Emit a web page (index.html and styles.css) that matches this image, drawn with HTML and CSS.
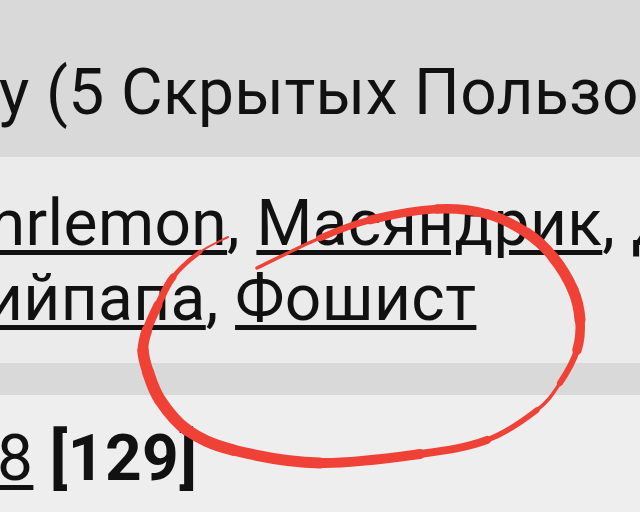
FILE: index.html
```html
<!DOCTYPE html>
<html lang="ru">
<head>
<meta charset="utf-8">
<title>Кто на форуме</title>
<link rel="stylesheet" href="styles.css">
</head>
<body>
<div class="page">
  <div class="header"><span class="title">у (5 Скрытых Пользователей)</span></div>
  <div class="users">
    <p class="user-list"><a href="#">mrlemon</a>, <a href="#">Масяндрик</a>, <a href="#">Джордж</a>,<br><a href="#" class="line-start">ийпапа</a>, <a href="#">Фошист</a></p>
  </div>
  <div class="divider"></div>
  <div class="stats"><a href="#">8</a> <b>[129]</b></div>
  <svg class="mark" width="640" height="512" viewBox="0 0 640 512" fill="none" stroke="#ef4136" stroke-linecap="round">
    <path stroke-width="2" d="M228 237 C223.3 239.5 209.2 245.3 200 252"/>
    <path stroke-width="4.5" d="M200 252 C190.8 258.7 180 268.2 173 277"/>
    <path stroke-width="7" d="M173 277 C166 285.8 162.3 296.2 158 305"/>
    <path stroke-width="9" d="M158 305 C153.7 313.8 149.5 322.5 147 330"/>
    <path stroke-width="10.5" d="M147 330 C144.5 337.5 142.8 343 143 350"/>
    <path stroke-width="11.5" d="M143 350 C143.2 357 145.2 363.7 148 372"/>
    <path stroke-width="12" d="M148 372 C150.8 380.3 153.5 390.3 160 400"/>
    <path stroke-width="12" d="M160 400 C166.5 409.7 174.8 421.7 187 430"/>
    <path stroke-width="11.5" d="M187 430 C199.2 438.3 210.8 444.5 233 450"/>
    <path stroke-width="11" d="M233 450 C255.2 455.5 288.8 462.3 320 463"/>
    <path stroke-width="10" d="M320 463 C351.2 463.7 392.2 457.8 420 454"/>
    <path stroke-width="8" d="M420 454 C447.8 450.2 467.5 447.3 487 440"/>
    <path stroke-width="5.5" d="M487 440 C506.5 432.7 524.8 419.5 537 410"/>
    <path stroke-width="3.5" d="M537 410 C549.2 400.5 553.3 393 560 383"/>
    <path stroke-width="6" d="M560 383 C566.7 373 573.7 360.5 577 350"/>
    <path stroke-width="9.5" d="M577 350 C580.3 339.5 580.7 330 580 320"/>
    <path stroke-width="11" d="M580 320 C579.3 310 577.5 300.5 573 290"/>
    <path stroke-width="11" d="M573 290 C568.5 279.5 560.7 266.5 553 257"/>
    <path stroke-width="10.5" d="M553 257 C545.3 247.5 538 240.2 527 233"/>
    <path stroke-width="10" d="M527 233 C516 225.8 502 218 487 214"/>
    <path stroke-width="9.5" d="M487 214 C472 210 456.5 208 437 209"/>
    <path stroke-width="8.5" d="M437 209 C417.5 210 389.5 215.2 370 220"/>
    <path stroke-width="6.5" d="M370 220 C350.5 224.8 338.8 230 320 238"/>
    <path stroke-width="3.5" d="M320 238 C301.2 246 267.5 263 257 268"/>
  </svg>
</div>
</body>
</html>
```

FILE: styles.css
```css
html, body {
  margin: 0;
  padding: 0;
}

body {
  width: 640px;
  height: 512px;
  overflow: hidden;
  font-family: Roboto, "Noto Sans", sans-serif;
  font-size: 64px;
  line-height: 75px;
  letter-spacing: 0.4px;
  color: #111;
}

.page {
  position: relative;
  height: 512px;
  display: flex;
  flex-direction: column;
}

.header {
  height: 157px;
  box-sizing: border-box;
  padding-top: 55px;
  background: #d9d9d9;
  white-space: nowrap;
  overflow: hidden;
}

.title {
  margin-left: -1px;
}

.users {
  height: 206px;
  box-sizing: border-box;
  padding-top: 29px;
  background: #ebebeb;
  overflow: hidden;
}

.user-list {
  margin: 0;
  white-space: nowrap;
  text-indent: -31px;
}

.line-start {
  margin-left: -14px;
}

a {
  color: #111;
  text-decoration: underline;
  text-decoration-thickness: 5px;
  text-underline-offset: 5px;
}

.divider {
  height: 32px;
  background: #d9d9d9;
}

.stats {
  flex: 1;
  box-sizing: border-box;
  padding-top: 26px;
  background: #eeeeee;
  white-space: nowrap;
  text-indent: -3px;
}

.stats b {
  font-weight: 700;
}

.mark {
  position: absolute;
  left: 0;
  top: 0;
  pointer-events: none;
}
```
